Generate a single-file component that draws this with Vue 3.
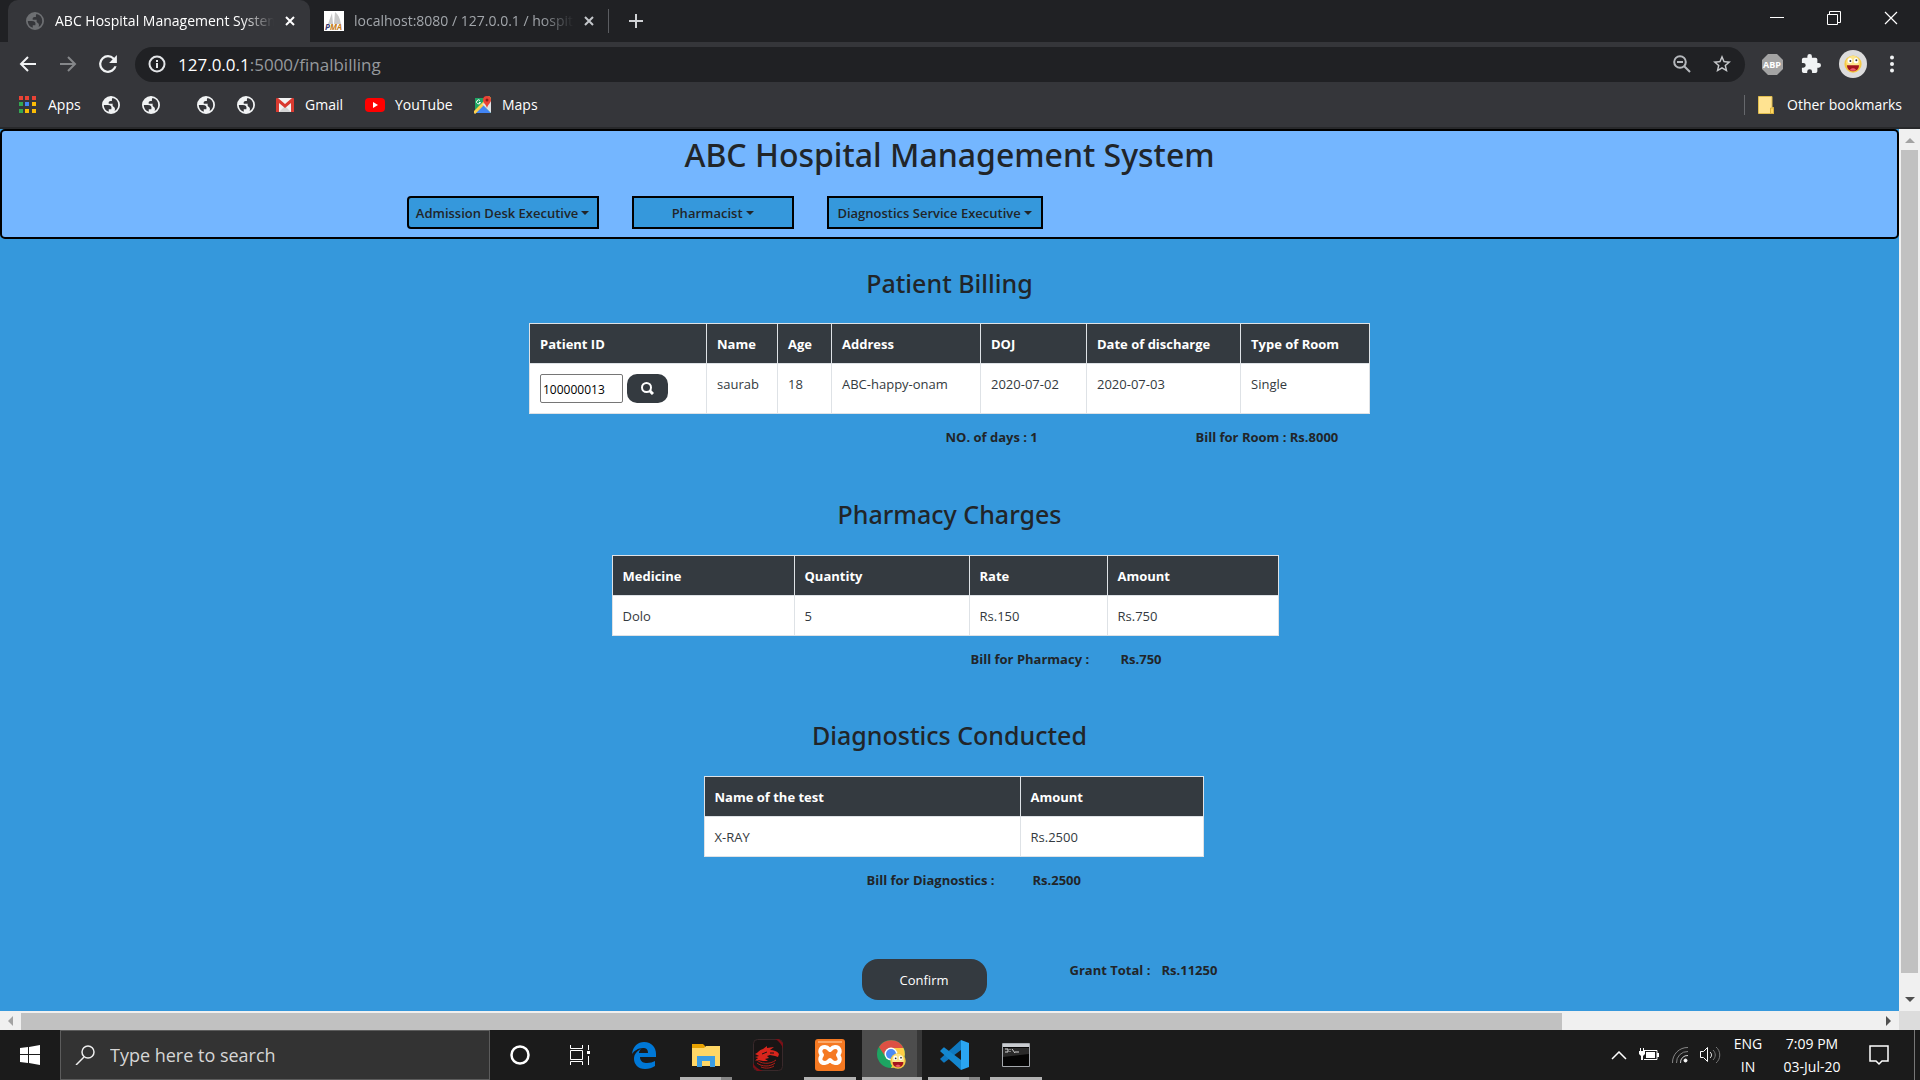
<script setup>
import { ref } from 'vue'

const patientId = ref('100000013')
const search = ref('')

const menus = [
  { label: 'Admission Desk Executive', size: 'medium' },
  { label: 'Pharmacist', size: 'small' },
  { label: 'Diagnostics Service Executive', size: 'large' }
]
const patient = { name: 'saurab', age: 18, address: 'ABC-happy-onam', joined: '2020-07-02', discharged: '2020-07-03', room: 'Single' }
const medicines = [{ name: 'Dolo', quantity: 5, rate: 'Rs.150', amount: 'Rs.750' }]
const tests = [{ name: 'X-RAY', amount: 'Rs.2500' }]
</script>

<template>
  <div class="screen">
    <svg class="defs" aria-hidden="true">
      <symbol id="globe" viewBox="2 2 20 20">
        <path fill="currentColor" fill-rule="evenodd" d="M12 2a10 10 0 1 0 0 20 10 10 0 0 0 0-20zM4 12h4.400c3.400 0 4.700 1.500 4 4.600H9.500v3A8 8 0 0 1 4 12zM14 4.300A8 8 0 0 1 20 12c0 3-1.500 5.200-4 6.800.8-2 .5-3.600-.7-4.600-1.300-1-2-2-1.300-3.700H9.500c-.5-2 .5-3 2-3H13V6c0-.8.3-1.400 1-1.700z" />
      </symbol>
      <symbol id="smiley" viewBox="0 0 24 24">
        <circle cx="12" cy="12" r="11.5" fill="#f5c945" />
        <circle cx="12" cy="10" r="9" fill="#fde58a" />
        <ellipse cx="8" cy="7.500" rx="3" ry="3.500" fill="#fff" />
        <ellipse cx="16" cy="7.500" rx="3" ry="3.500" fill="#fff" />
        <circle cx="8.500" cy="8" r="1.300" fill="#333" />
        <circle cx="16.500" cy="7" r="1.300" fill="#333" />
        <path d="M4 13.500h16c0 5-3.500 8-8 8s-8-3-8-8z" fill="#a3141c" />
        <path d="M8 20c1-3 7-3 8 0-2 1.500-6 1.500-8 0z" fill="#f05a6a" />
      </symbol>
    </svg>

    <header class="tabs">
      <div class="tab active">
        <svg class="i18 dim"><use href="#globe" /></svg>
        <span class="tab-title">ABC Hospital Management System</span>
        <button class="icon-btn" aria-label="Close tab"><svg width="10" height="10"><path d="M1 1l8 8M9 1l-8 8" stroke="#fff" stroke-width="2" /></svg></button>
      </div>
      <div class="tab second">
        <svg width="20" height="20" viewBox="0 0 20 20"><path fill="#fff" d="M0 0h20v20H0z" /><path d="M8 2L4 13h5zM11 1l-1 12h7C16 7 14 3 11 1z" fill="#c9c9c9" /><text x="1" y="19" font-size="8" font-weight="700" font-style="italic" fill="#36366e">P<tspan fill="#c47a16">MA</tspan></text></svg>
        <span class="tab-title">localhost:8080 / 127.0.0.1 / hospital</span>
        <button class="icon-btn" aria-label="Close tab"><svg width="10" height="10"><path d="M1 1l8 8M9 1l-8 8" stroke="#c4c7cb" stroke-width="2" /></svg></button>
      </div>
      <button class="icon-btn new-tab" aria-label="New tab"><svg width="16" height="16"><path d="M8 1v14M1 8h14" stroke="#d0d2d5" stroke-width="2" /></svg></button>
      <div class="window-controls">
        <button class="icon-btn" aria-label="Minimize"><svg width="14" height="14"><path d="M0 6.500h14" stroke="#fff" /></svg></button>
        <button class="icon-btn" aria-label="Restore"><svg width="14" height="14" fill="none" stroke="#fff"><path d="M.5 3.500h10v10H.5zM2.500 3V.5h11v11H11" /></svg></button>
        <button class="icon-btn" aria-label="Close"><svg width="14" height="14"><path d="M1 1l12 12M13 1L1 13" stroke="#fff" stroke-width="1.200" /></svg></button>
      </div>
    </header>

    <nav class="toolbar" aria-label="Browser toolbar">
      <div class="nav-buttons">
        <button class="icon-btn" aria-label="Back"><svg width="18" height="16" fill="none" stroke="#f1f3f4" stroke-width="2"><path d="M17 8H2M9 1L2 8l7 7" /></svg></button>
        <button class="icon-btn" aria-label="Forward"><svg width="18" height="16" fill="none" stroke="#85878a" stroke-width="2"><path d="M1 8h15M9 1l7 7-7 7" /></svg></button>
        <button class="icon-btn" aria-label="Reload"><svg width="20" height="20" viewBox="3 3 18 18"><path fill="#f1f3f4" d="M17.650 6.350A7.958 7.958 0 0 0 12 4a8 8 0 1 0 7.730 10h-2.080A6 6 0 1 1 12 6c1.660 0 3.140.69 4.220 1.780L13 11h7V4z" /></svg></button>
      </div>
      <div class="address">
        <svg width="18" height="18" viewBox="0 0 18 18"><circle cx="9" cy="9" r="7.500" fill="none" stroke="#e3e5e8" stroke-width="2" /><path d="M9 8v5M9 5v2" stroke="#e3e5e8" stroke-width="2" /></svg>
        <div class="url" role="textbox" aria-label="Address" tabindex="0">127.0.0.1<span>:5000/finalbilling</span></div>
        <button class="icon-btn" aria-label="Zoom"><svg width="18" height="18" viewBox="0 0 18 18" fill="none" stroke="#b5b8bc" stroke-width="2"><circle cx="7" cy="7" r="5.800" /><path d="M11 11l6 6M4 7h6" /></svg></button>
        <button class="icon-btn" aria-label="Bookmark this page"><svg width="18" height="18" viewBox="2 2 20 20"><path fill="#c6c8cb" d="M22 9.240l-7.190-.62L12 2 9.190 8.630 2 9.240l5.460 4.730L5.820 21 12 17.270 18.180 21l-1.630-7.030L22 9.240zM12 15.400l-3.760 2.270 1-4.280-3.320-2.880 4.380-.38L12 6.100l1.710 4.040 4.380.38-3.320 2.880 1 4.280L12 15.400z" /></svg></button>
      </div>
      <div class="extensions">
        <button class="icon-btn" aria-label="Adblock Plus"><svg width="21" height="21" viewBox="0 0 21 21"><path d="M6 0h9l6 6v9l-6 6H6l-6-6V6z" fill="#a3a3a3" /><text x="10" y="14" text-anchor="middle" font-size="9" font-weight="700" fill="#fff">ABP</text></svg></button>
        <button class="icon-btn" aria-label="Extensions"><svg width="20" height="20" viewBox="1 1 22 22"><path fill="#f1f3f4" d="M20.500 11H19V7a2 2 0 0 0-2-2h-4V3.500a2.500 2.500 0 0 0-5 0V5H4a2 2 0 0 0-2 2v3.800h1.500a2.700 2.700 0 0 1 0 5.400H2V20a2 2 0 0 0 2 2h3.800v-1.500a2.700 2.700 0 0 1 5.400 0V22H17a2 2 0 0 0 2-2v-4h1.500a2.500 2.500 0 0 0 0-5z" /></svg></button>
        <button class="icon-btn" aria-label="Profile"><svg width="28" height="28"><circle cx="14" cy="14" r="14" fill="#dcdcdc" /><use href="#smiley" x="5" y="5" width="18" height="18" /></svg></button>
        <button class="icon-btn" aria-label="Menu"><svg width="4" height="18" fill="#f1f3f4"><circle cx="2" cy="2.500" r="2" /><circle cx="2" cy="9" r="2" /><circle cx="2" cy="15.500" r="2" /></svg></button>
      </div>
    </nav>

    <nav class="bookmarks" aria-label="Bookmarks">
      <a href="#" class="mark apps">
        <svg width="17" height="17"><path fill="#ea4335" d="M0 0h4v4H0zM6 0h4v4H6zM13 0h4v4h-4z" /><path fill="#34a853" d="M0 6h4v4H0zM0 13h4v4H0z" /><path fill="#4285f4" d="M6 6h4v4H6z" /><path fill="#fbbc05" d="M13 6h4v4h-4zM6 13h4v4H6zM13 13h4v4h-4z" /></svg>
        <span>Apps</span>
      </a>
      <a href="#" class="globes" aria-label="Saved page"><svg class="i18"><use href="#globe" /></svg></a>
      <a href="#" class="globes wide" aria-label="Saved page"><svg class="i18"><use href="#globe" /></svg></a>
      <a href="#" class="globes" aria-label="Saved page"><svg class="i18"><use href="#globe" /></svg></a>
      <a href="#" class="globes" aria-label="Saved page"><svg class="i18"><use href="#globe" /></svg></a>
      <a href="#" class="mark gmail">
        <svg width="18" height="14"><path fill="#f2f2f2" d="M1 0h16v14H1z" /><path fill="#d5d5d5" d="M3 14l6-6 6 6z" /><path fill="#d93a30" d="M0 1a1 1 0 0 1 1-1h1l7 6 7-6h1a1 1 0 0 1 1 1v13h-3V5L9 10 3 5v9H0z" /></svg>
        <span>Gmail</span>
      </a>
      <a href="#" class="mark youtube">
        <svg width="20" height="14"><rect width="20" height="14" rx="4" fill="red" /><path fill="#fff" d="M8 4l5 3-5 3z" /></svg>
        <span>YouTube</span>
      </a>
      <a href="#" class="mark">
        <svg width="18" height="18" viewBox="0 0 18 18"><path fill="#1fa463" d="M1 2h16v15H1z" /><path fill="#4285f4" d="M1 17L9 9l8 8z" /><path d="M0 17L16 1" stroke="#ffd04b" stroke-width="3" /><path d="M8 8l9 9V5z" fill="#dfe2e6" /><path d="M13 0a4 4 0 0 1 4 4c0 3-3 4-4 8-1-4-4-5-4-8a4 4 0 0 1 4-4z" fill="#ea4335" /><circle cx="13" cy="4" r="1.500" fill="#8d1d17" /><path d="M6 4.500a2 2 0 1 0 .5 2H5" fill="none" stroke="#fff" /></svg>
        <span>Maps</span>
      </a>
      <a href="#" class="mark other">
        <svg width="16" height="18"><path d="M.5.5H14v11h1.500v6H.5z" fill="#ffe391" stroke="#e0bd4e" /><path d="M12.500 12h3v5.500h-3z" fill="#ffd75e" stroke="#d9b13f" /></svg>
        <span>Other bookmarks</span>
      </a>
    </nav>

    <div class="viewport">
      <main class="page">
        <header class="banner">
          <h1>ABC Hospital Management System</h1>
          <nav class="menus">
            <button v-for="m in menus" :key="m.label" class="menu" :class="m.size">{{ m.label }}<i class="caret"></i></button>
          </nav>
        </header>

        <section>
          <h2>Patient Billing</h2>
          <table class="patient">
            <thead>
              <tr>
                <th class="c-id"><label for="pid">Patient ID</label></th>
                <th class="c-name">Name</th>
                <th class="c-age">Age</th>
                <th class="c-address">Address</th>
                <th class="c-doj">DOJ</th>
                <th class="c-dod">Date of discharge</th>
                <th>Type of Room</th>
              </tr>
            </thead>
            <tbody>
              <tr>
                <td class="entry">
                  <div class="lookup">
                    <input id="pid" v-model="patientId" type="text">
                    <button aria-label="Search patient"><svg width="13" height="13" fill="none" stroke="#fff" stroke-width="2"><circle cx="5.500" cy="5.500" r="4.500" /><path d="M8.500 8.500L12 12" stroke-width="3" /></svg></button>
                  </div>
                </td>
                <td>{{ patient.name }}</td>
                <td>{{ patient.age }}</td>
                <td>{{ patient.address }}</td>
                <td>{{ patient.joined }}</td>
                <td>{{ patient.discharged }}</td>
                <td>{{ patient.room }}</td>
              </tr>
            </tbody>
          </table>
          <div class="summary room">
            <span class="key">NO. of days : 1</span>
            <span>Bill for Room : Rs.8000</span>
          </div>
        </section>

        <section>
          <h2>Pharmacy Charges</h2>
          <table class="pharmacy">
            <thead>
              <tr><th class="c-medicine">Medicine</th><th class="c-quantity">Quantity</th><th class="c-rate">Rate</th><th>Amount</th></tr>
            </thead>
            <tbody>
              <tr v-for="m in medicines" :key="m.name"><td>{{ m.name }}</td><td>{{ m.quantity }}</td><td>{{ m.rate }}</td><td>{{ m.amount }}</td></tr>
            </tbody>
          </table>
          <div class="summary medicine">
            <span class="key">Bill for Pharmacy :</span>
            <span>Rs.750</span>
          </div>
        </section>

        <section>
          <h2>Diagnostics Conducted</h2>
          <table class="diagnostics">
            <thead>
              <tr><th class="c-test">Name of the test</th><th>Amount</th></tr>
            </thead>
            <tbody>
              <tr v-for="t in tests" :key="t.name"><td>{{ t.name }}</td><td>{{ t.amount }}</td></tr>
            </tbody>
          </table>
          <div class="summary test">
            <span class="key">Bill for Diagnostics :</span>
            <span>Rs.2500</span>
          </div>
        </section>

        <div class="summary total">
          <button class="confirm">Confirm</button>
          <span class="key">Grant Total :</span>
          <span>Rs.11250</span>
        </div>
      </main>

      <div class="vbar">
        <svg width="10" height="5"><path d="M0 5l5-5 5 5z" fill="#a3a3a3" /></svg>
        <div class="vtrack"><div class="vthumb"></div></div>
        <svg width="10" height="5"><path d="M0 0l5 5 5-5z" fill="#505050" /></svg>
      </div>
      <div class="hbar">
        <svg width="5" height="10"><path d="M5 0L0 5l5 5z" fill="#a3a3a3" /></svg>
        <div class="htrack"><div class="hthumb"></div></div>
        <svg width="5" height="10"><path d="M0 0l5 5-5 5z" fill="#505050" /></svg>
      </div>
      <div class="corner"></div>
    </div>

    <footer class="taskbar">
      <button class="icon-btn start" aria-label="Start"><svg width="20" height="20" fill="#fff"><path d="M0 3l8-1v7H0zM9 2l11-2v9H9zM0 10h8v8l-8-1zM9 10h11v10L9 18z" /></svg></button>
      <label class="find">
        <svg width="20" height="20" fill="none" stroke="#eee" stroke-width="1.500"><circle cx="13" cy="7" r="6" /><path d="M9 12l-8 8" /></svg>
        <input v-model="search" type="text" placeholder="Type here to search" aria-label="Type here to search">
      </label>
      <div class="programs">
        <button class="icon-btn" aria-label="Cortana"><svg width="22" height="22"><circle cx="11" cy="11" r="8.500" fill="none" stroke="#fff" stroke-width="2.500" /></svg></button>
        <button class="icon-btn" aria-label="Task View"><svg width="21" height="20" fill="none" stroke="#fff"><path d="M.5 0v3.500h12V0M.5 5.500h12v9H.5zM.5 20v-3.500h12V20M18.500 0v5M18.500 11v9" /><path d="M17 6h3v3h-3z" fill="#fff" stroke="none" /></svg></button>
        <button class="icon-btn" aria-label="Edge"><svg width="26" height="27" viewBox="0 0 26 27"><path fill="#0078d7" d="M1 12C2 4 7 0 13 0c8 0 12 6 12 12v3H9c0 5 4 6 7 6 3 0 6-1 8-2v5c-3 2-6 3-10 3C7 27 3 22 3 17c0-5 3-8 7-10-2 2-2 3-2 4h9c0-4-2-5-5-5-5 0-9 3-11 6z" /></svg></button>
        <button class="icon-btn run pair" aria-label="File Explorer"><svg width="28" height="24"><path fill="#e8a200" d="M0 1h11l2 2v5H0z" /><path fill="#ffd766" d="M0 5h12l2-2h14v20H0z" /><path fill="#3b9de3" d="M5 24V13h18v11h-5v-6h-8v6z" /></svg></button>
        <button class="icon-btn" aria-label="Dragon Center"><svg width="30" height="32" viewBox="0 0 30 32"><rect x=".5" y=".5" width="29" height="31" rx="4" fill="#181515" stroke="#39292b" /><path d="M22 0h4l4 4v6c-1-4-4-8-8-10zM0 24v4l4 4h6c-5-2-8-4-10-8z" fill="#7a0f16" /><path fill="#d9251c" d="M2 15c3-1 4-4 8-5l4-3v2l7-1-4 3c4 0 7 1 9 4l-1 3-3-1-5-1-3 1 2 2-4 1 3 2-5 0-5-1-3 1 3-3-3-1 4-1z" /><path d="M9 15l5-2M17 14l4 0" stroke="#181515" /><path d="M3 20c4 5 14 6 20 1M4 24c5 4 13 4 18 0M8 28c5 2 10 1 13-1" fill="none" stroke="#b21d17" /></svg></button>
        <button class="icon-btn run" aria-label="XAMPP"><svg width="30" height="32" viewBox="0 0 30 32"><rect width="30" height="32" rx="3" fill="#f57922" /><path d="M3 2h24v2H3z" fill="#fba868" /><path d="M10 8c2.500 0 4 2 5 3 1-1 2.500-3 5-3 5 0 6 5 3 8 3 4 2 8-3 8-2.500 0-4-2-5-3-1 1-2.500 3-5 3-5 0-6-4-3-8-3-3-2-8 3-8z" fill="none" stroke="#fff" stroke-width="4" stroke-linejoin="round" /></svg></button>
        <button class="icon-btn run current" aria-label="Chrome"><svg width="30" height="30" viewBox="0 0 30 30"><circle cx="14" cy="14" r="14" fill="#1da462" /><path d="M2 7a14 14 0 0 1 24.500 1H14a6 6 0 0 0-6 8z" fill="#dd5144" /><path d="M14 28a14 14 0 0 0 12.500-20H15c5 1 7 6 4 10z" fill="#ffcd46" /><circle cx="14" cy="14" r="6.500" fill="#fff" /><circle cx="14" cy="14" r="5" fill="#4c8bf5" /><use href="#smiley" x="13" y="13" width="16" height="16" /></svg></button>
        <button class="icon-btn run pair" aria-label="Visual Studio Code"><svg width="30" height="32" viewBox="0 0 30 30"><path fill="#0f78bf" d="M22 0L2 18c-1 1-1 1 0 2l2 2c1 1 1 1 2 0L22 10z" /><path fill="#1487cf" d="M22 30L2 12c-1-1-1-1 0-2l2-2c1-1 1-1 2 0l16 12z" /><path fill="#2aa5f2" d="M22 0l8 3v24l-8 3z" /></svg></button>
        <button class="icon-btn run" aria-label="Command Prompt"><svg width="28" height="24"><path fill="#050505" stroke="#a4a8ad" d="M.5.5h27v23H.5z" /><path fill="#c9ccd0" d="M1 1h26v3H1z" /><path d="M3 6h3v3H3M8 6v1M8 8v1M10 6l3 4M13 9h4" stroke="#ccc" fill="none" /><path d="M1 5h26v6L1 14z" fill="#fff" opacity=".15" /></svg></button>
      </div>
      <div class="tray">
        <svg width="16" height="9" fill="none" stroke="#fff" stroke-width="1.500"><path d="M1 8l7-7 7 7" /></svg>
        <svg width="21" height="14"><path d="M5 2.500h13v9H5" fill="none" stroke="#fff" /><path d="M7 4h9v6H7zM18 5h2v4h-2zM0 3h6v3L4 8v4H2V8L0 6zM1 0h1v3H1zM4 0h1v3H4z" fill="#fff" /></svg>
        <svg width="16" height="16" fill="none" stroke="#858585"><path d="M.5 16A15 15 0 0 1 16 .5M4.500 16A11 11 0 0 1 16 4.500" /><path d="M8.500 16A7 7 0 0 1 16 8.500" stroke="#ccc" /><circle cx="13.500" cy="13.500" r="1.500" fill="#fff" stroke="#fff" /></svg>
        <svg width="21" height="18" fill="none" stroke="#fff"><path d="M.5 5.500h3l4-4v14l-4-4h-3z" /><path d="M10 6c2 2 2 4 0 6" /><path d="M13 4c3 3 3 7 0 10M16 1c5 4 5 12 0 16" stroke="#777" /></svg>
        <div class="stack lang"><span>ENG</span><span>IN</span></div>
        <div class="stack clock"><span>7:09 PM</span><span>03-Jul-20</span></div>
        <svg width="20" height="21" fill="none" stroke="#fff" stroke-width="1.500"><path d="M1 1h18v15h-6l-3 3-3-3H1z" /></svg>
      </div>
    </footer>
  </div>
</template>

<style>
body { margin: 0; overflow: hidden; }
</style>

<style scoped>
* { box-sizing: border-box; }
.screen { display: flex; flex-direction: column; height: 100vh; font-family: "Open Sans", "Noto Sans", sans-serif; background: #3598dc; }
.defs { position: absolute; width: 0; height: 0; }
svg { display: block; flex: none; }
button, input { font-family: inherit; }
.icon-btn { display: flex; align-items: center; justify-content: center; flex: none; padding: 0; border: 0; background: none; }
a { color: #fff; text-decoration: none; }
.i18 { width: 18px; height: 18px; color: #f1f3f4; }
.i18.dim { color: #6d6f72; }

.tabs { display: flex; flex: none; height: 42px; padding-left: 8px; background: #202124; }
.tab { display: flex; align-items: center; height: 42px; font-size: 14px; }
.tab.active { width: 302px; padding: 0 15px 0 18px; gap: 11px; border-radius: 10px 10px 0 0; background: #35363a; color: #fff; }
.tab.second { width: 298px; padding: 0 15px 0 14px; gap: 10px; color: #a2a6ab; }
.tab.second::after { content: ""; flex: none; width: 1px; height: 24px; margin: 0 -16px 0 4px; background: #5b5d61; }
.tab-title { flex: 1; overflow: hidden; padding-bottom: 2px; white-space: nowrap; -webkit-mask-image: linear-gradient(90deg, #000 85%, transparent); mask-image: linear-gradient(90deg, #000 85%, transparent); }
.new-tab { width: 56px; }
.window-controls { display: flex; gap: 1px; margin-left: auto; padding-right: 1px; }
.window-controls .icon-btn { width: 56px; height: 36px; }

.toolbar { display: flex; flex: none; align-items: center; height: 44px; padding-right: 26px; background: #35363a; }
.nav-buttons { display: flex; gap: 20px; width: 135px; padding-left: 18px; align-items: center; }
.nav-buttons .icon-btn { width: 20px; }
.address { display: flex; flex: 1; align-items: center; height: 35px; padding: 0 14px 0 13px; border-radius: 18px; background: #202124; }
.url { flex: 1; margin-left: 12px; font-size: 17px; color: #fff; white-space: nowrap; }
.url span { color: #96999d; }
.address .icon-btn + .icon-btn { margin-left: 22px; }
.extensions { display: flex; align-items: center; gap: 18px; padding-left: 17px; }
.extensions .icon-btn:last-child { margin-left: 5px; }

.bookmarks { display: flex; flex: none; align-items: center; height: 43px; padding: 0 18px 4px 19px; border-bottom: 2px solid #28292b; background: #35363a; font-size: 14px; }
.mark { display: flex; align-items: center; gap: 10px; }
.apps { width: 82px; gap: 12px; }
.globes { width: 40px; padding-left: 1px; }
.globes.wide { width: 55px; }
.gmail { width: 89px; gap: 11px; }
.youtube { width: 109px; }
.other { height: 20px; margin-left: auto; padding-left: 13px; gap: 13px; border-left: 1px solid #66686c; }

.viewport { display: grid; flex: 1; grid-template-columns: 1fr 21px; grid-template-rows: 1fr 19px; min-height: 0; }
.page { overflow: hidden; background: #3598dc; color: #212529; font-size: 13px; line-height: 19px; }
.banner { height: 110px; border: 2px solid #000; border-radius: 5px; background: #74b6ff; }
h1, h2 { font-family: "Noto Sans", "Open Sans", sans-serif; font-weight: 500; text-align: center; }
h1 { margin: 3px 0 21px; font-size: 32px; line-height: 41px; }
.menus { display: flex; gap: 33px; padding-left: 21.350%; }
.menu { display: flex; align-items: center; justify-content: center; height: 33px; padding: 0; border: 2px solid #000; border-radius: 0; background: #3598dc; color: #212529; font-size: 13px; font-weight: 600; white-space: nowrap; }
.menu:first-child { border-radius: 4px 0 0 4px; }
.menu.small { width: 162px; }
.menu.medium { width: 192px; }
.menu.large { width: 216px; }
.caret { margin-left: 3px; border: 4px solid transparent; border-top-color: currentColor; border-bottom: 0; }

section { height: 221px; }
section:first-of-type { height: 231px; }
h2 { margin: 0; padding: 28px 0 25px; font-size: 25px; line-height: 32px; }
section:first-of-type h2 { padding-bottom: 24px; }
table { margin: 0 auto; border-collapse: collapse; table-layout: fixed; background: #fff; }
th, td { height: 40px; padding: 11px 10px 9px; border: 1px solid #dee2e6; text-align: left; vertical-align: top; white-space: nowrap; }
th { background: #343a40; color: #fff; font-weight: 700; }
td { color: #343a40; }
td.entry { padding: 10px; }
.patient { width: 841px; }
.c-id { width: 177px; }
.c-name { width: 71px; }
.c-age { width: 54px; }
.c-address { width: 149px; }
.c-doj { width: 106px; }
.c-dod { width: 154px; }
.pharmacy { width: 667px; margin-left: calc(50% - 338px); }
.c-medicine { width: 182px; }
.c-quantity { width: 175px; }
.c-rate { width: 138px; }
.diagnostics { width: 500px; margin-left: calc(50% - 246px); }
.c-test { width: 316px; }
.lookup { display: flex; gap: 4px; height: 29px; }
.lookup input { width: 83px; padding: 1px 2px 0; border: 1px solid #767676; border-radius: 2px; font-size: 12px; color: #000; }
.lookup button { display: flex; align-items: center; justify-content: center; width: 41px; padding: 0; border: 0; border-radius: 10px; background: #343a40; }
.summary { display: flex; padding-top: 14px; font-size: 13px; font-weight: 700; white-space: nowrap; }
.room { padding-left: calc(50% - 4px); }
.room .key { width: 250px; }
.medicine { padding-left: calc(50% + 21px); }
.medicine .key { width: 150px; }
.test { padding-left: calc(50% - 83px); }
.test .key { width: 166px; }
.total { padding: 47px 0 0 calc(50% - 88px); }
.total .key { width: 92px; margin: 2px 0 0 83px; }
.total span:last-child { margin-top: 2px; }
.confirm { width: 125px; height: 41px; padding: 0; border: 0; border-radius: 16px; background: #343a40; color: #fff; font-size: 13px; }

.vbar, .hbar { display: flex; align-items: center; background: #f0f0f0; }
.vbar { flex-direction: column; padding: 9px 0; }
.vtrack { flex: 1; width: 17px; margin: 7px 0; }
.vthumb { height: 98%; background: #c1c1c1; }
.hbar { padding: 0 8px; }
.htrack { flex: 1; height: 17px; margin: 0 8px; align-self: flex-end; }
.hthumb { width: 83%; height: 100%; background: #c1c1c1; }
.corner { background: #dcdcdc; }

.taskbar { display: flex; flex: none; height: 50px; background: #1b1b1b; color: #fff; }
.start { width: 60px; }
.find { display: flex; align-items: center; gap: 15px; width: 430px; padding-left: 14px; border: 1px solid #5c5c5c; background: #333; }
.find input { flex: 1; min-width: 0; padding: 0; border: 0; outline: 0; background: none; color: #fff; font-size: 18px; }
.find input::placeholder { color: #d6d6d6; opacity: 1; }
.programs { display: flex; }
.programs .icon-btn { width: 62px; }
.programs .icon-btn:first-child, .programs .icon-btn:nth-child(2) { width: 60px; }
.programs .icon-btn:nth-child(2) { margin-right: 3px; }
.programs .run { position: relative; }
.programs .run::after { content: ""; position: absolute; right: 5px; bottom: 0; left: 5px; height: 3px; background: #b2b2b2; }
.programs .pair::after { background: linear-gradient(90deg, #b2b2b2 78%, #858585 78%); }
.programs .current { background: linear-gradient(90deg, #4d4d4d 92%, #373737 92%) center / 60px 100% no-repeat; }
.programs .current::after { right: 1px; left: 1px; }
.tray { display: flex; align-items: center; gap: 12px; margin-left: auto; padding-right: 31px; background: linear-gradient(#777, #777) calc(100% - 5px) 0 / 1px 100% no-repeat; }
.stack { display: flex; flex-direction: column; font-size: 14px; line-height: 23px; text-align: center; }
.lang { width: 30px; }
.clock { width: 74px; margin-right: 8px; }
</style>
